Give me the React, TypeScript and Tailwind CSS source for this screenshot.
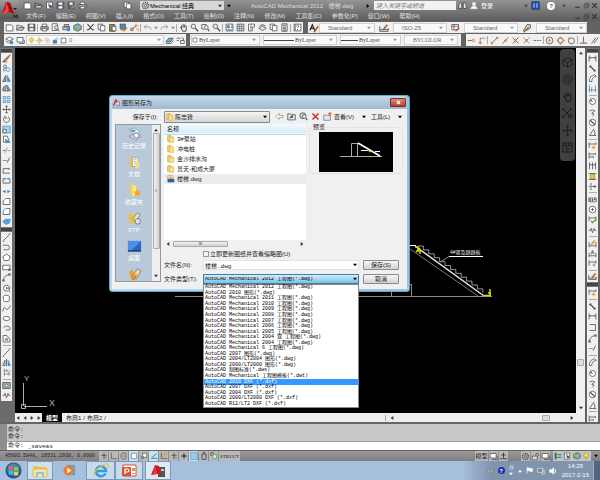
import React from "react";

const ink = "#4a4a4a";
const blue = "#3f8fd0";
const orange = "#e8793a";

const glyphs: Record<string, React.ReactNode> = {
  new: <path d="M1.5 2.5h7l2 2v6h-9z" fill="#fff" />,
  open: (
    <>
      <path d="M1 9.5V3h3l1 1h4v2" />
      <path d="M1 9.5 3.5 6H11L9 9.5z" fill="#c8c8c8" />
    </>
  ),
  save: (
    <>
      <path d="M1.5 1.5h9v9h-9z" fill="#5b6b80" />
      <path d="M3.5 2h5v3h-5zM3.5 7h5v3h-5z" fill="#fff" stroke="none" />
    </>
  ),
  saveEdit: (
    <>
      <path d="M1.5 1.5h8v9h-8z" fill="#5b6b80" />
      <path d="M3.5 2h4v3h-4z" fill="#fff" stroke="none" />
      <path d="m6 10 5-5" stroke={orange} strokeWidth={2} />
    </>
  ),
  sheet: (
    <>
      <path d="M2 1.5h8v9H2z" fill="#fff" />
      <path d="M4 4h3M4 6h4" />
      <circle cx="7.500" cy="7.500" r="1.500" fill={ink} />
    </>
  ),
  print: (
    <>
      <path d="M3 1.500h6V5H3z" fill="#fff" />
      <path d="M1 5h10v4H1z" fill="#b0b0b0" />
      <path d="M3 7.500h6v3H3z" fill="#fff" />
    </>
  ),
  preview: (
    <>
      <path d="M1.500 1h7v9h-7z" fill="#fff" />
      <circle cx="7" cy="6" r="2.500" fill="#dfe9f2" />
      <path d="m9 8 2 3" />
    </>
  ),
  publish: (
    <>
      <path d="M1 5h9v4H1zM3 2h6v3H3z" fill="#ccc" />
      <circle cx="8.500" cy="8.500" r="2.500" fill={blue} stroke="none" />
    </>
  ),
  globe: (
    <>
      <path d="m6 1 5 2.500v5L6 11 1 8.500v-5z" fill="#6dafd6" />
      <path d="M1 3.500 6 6v5M6 6l5-2.500" stroke="#e0b030" />
      <path d="M2 6v3l3 1.500V7z" fill="#62b34a" stroke="none" />
    </>
  ),
  cut: <path d="m2 1.500 7 8M10 1.500l-7 8M1 9h2M9 9h2" strokeWidth={1.400} />,
  copy: (
    <>
      <path d="M1.500 1.500h6v7h-6z" fill="#fff" />
      <path d="M4.500 3.500h6v7h-6z" fill="#fff" />
    </>
  ),
  paste: (
    <>
      <path d="M2 2h7v9H2z" fill="#a08050" />
      <path d="M5.500 4.500h5v6h-5z" fill="#fff" />
    </>
  ),
  clip: (
    <>
      <path d="M1.500 1.500h7v6h-7z" fill={blue} />
      <path d="M2 9h5M6 11l5-5" stroke="#c9822f" strokeWidth={2} />
    </>
  ),
  blocks: (
    <>
      <path d="M1 10h3V7H1zM4 7l4-3" />
      <path d="M8 1v5M6 3.500h5M8 8h3v3" stroke={orange} />
    </>
  ),
  undo: <path d="M4.500 2 1.500 5l3 3M2 5h6q3 0 2.500 4" stroke="#8a8a8a" />,
  redo: <path d="m7.500 2 3 3-3 3M10 5H4Q1 5 1.500 9" stroke="#8a8a8a" />,
  hand: <path d="M3 7 1.500 5.500M3.500 8V3M5.500 6V1.500M7.500 6V2M9.500 7V3.500M3 7l2 4h4l1-4" strokeWidth={1.300} />,
  zoom: (
    <>
      <circle cx="4.500" cy="4.500" r="3" fill="#e3edf5" />
      <path d="m7 7 4 4" strokeWidth={1.600} />
    </>
  ),
  zoomWin: (
    <>
      <path d="M1 2h6v6H1z" />
      <circle cx="7" cy="6" r="2.500" fill="#fff" />
      <path d="m9 8 2 3" strokeWidth={1.500} />
    </>
  ),
  zoomExtents: (
    <>
      <path d="m1 1 9 9M10 1 1 10M1 3V1h2M8 1h2v2M1 8v2h2" />
      <circle cx="9" cy="9" r="2" />
    </>
  ),
  panel: (
    <>
      <path d="M1.500 1.500h9v9h-9z" fill="#fff" />
      <path d="M2.500 3h4v4h-4z" fill={blue} stroke="none" />
      <path d="M8 4h2M8 6h2M3 9h6" />
    </>
  ),
  grid: (
    <>
      <path d="M1.500 1.500h9v9h-9z" fill="#dce6ee" />
      <path d="M4.500 2v8M7.500 2v8M2 4.500h8M2 7.500h8" strokeWidth={0.700} />
    </>
  ),
  palette: <path d="M2 1.500h8v4H7v5H2zM4 4h3M4 6h2M4 8h2" fill="#fff" />,
  layers: <path d="m1 7 5-3 5 3-5 3zM2 4l4-2 4 2" fill="#dfe7ec" />,
  monitor: (
    <>
      <path d="M1.500 2h8v6h-8z" fill="#fff" />
      <path d="M4 10h7V5" />
    </>
  ),
  calc: <path d="M2.500 1h7v10h-7zM4 3h4M4 5.500h4M4 7.500h4M4 9.500h4" fill="#e8e8e8" />,
  help: (
    <>
      <path d="M1.500 1.500h9v9h-9z" fill="#fff" />
      <path d="M4.500 4Q6 2 7.500 4 7.500 5.500 6 6.500M6 8v1.500M3 2v8" />
    </>
  ),
  textStyle: (
    <>
      <path d="m1 9 3-7 3 7M2 6.500h4" strokeWidth={1.400} stroke="#222" />
      <path d="m6 11 5-7" stroke="#b05a28" strokeWidth={2} />
    </>
  ),
  dimStyle: (
    <>
      <path d="M1 4v6h10V6M1 8h10" />
      <path d="m5 8 5-6" stroke="#b05a28" strokeWidth={2} />
    </>
  ),
  tableStyle: (
    <>
      <path d="M1 2h9v7H1zM1 4.500h9M4 2v7" fill="#fff" />
      <path d="m6 11 5-5" stroke="#b05a28" strokeWidth={1.600} />
    </>
  ),
  leader: (
    <>
      <path d="M2 9 6 2h4v4L5 9z" fill="#ddd" />
      <path d="m2 11 6-6" stroke="#9b6a33" strokeWidth={1.600} />
    </>
  ),
  layerProps: (
    <>
      <path d="m1 4 5-2.500L11 4 6 6.500zM1 7l4 2" fill="#fff" />
      <circle cx="8.500" cy="8.500" r="2.500" fill={blue} stroke="none" />
    </>
  ),
  bulb: <path d="M4 8Q1.500 5 3.500 2.500t5 0T8 8zM4.500 10h3" fill="#ffe14f" stroke="#a88a28" />,
  sun: (
    <>
      <circle cx="6" cy="6" r="2.500" fill="#ffd84a" stroke="#a88a28" />
      <path d="M6 0v2M6 10v2M0 6h2M10 6h2M2 2l1 1M9 9l1 1M10 2 9 3M3 9l-1 1" stroke="#8f7a36" />
    </>
  ),
  freeze: <path d="M2 2h5v5H2zM5 5h5v5H5z" stroke="#bbb" fill="#eee" />,
  lock: (
    <>
      <path d="M2 5.500h6v5H2z" fill={blue} />
      <path d="M6.500 5V2.500q2-2 3.500 0V5" stroke={blue} />
    </>
  ),
  unlock: (
    <>
      <path d="M1.500 5.500h7v5h-7z" fill="#ddd" />
      <path d="M6.500 5V2.500q2-2 3.500 0V5" />
    </>
  ),
  square: <path d="M2 2h8v8H2z" fill="#fff" stroke="#222" />,
  layerPrev: (
    <>
      <path d="m1 8 4-5h6L7 8z" fill="#6fb0d8" />
      <path d="M1 10h7l3-4" />
    </>
  ),
  layerState: <path d="M1 3h5M1 6h3M8 2q3 1 2 4M6 6h5v4H6z" />,
  snapPoint: (
    <>
      <path d="M1 6h7" />
      <circle cx="8.500" cy="6" r="1.700" stroke={orange} fill="#f9c9ae" />
    </>
  ),
  snapFrom: (
    <>
      <path d="M3 3h7M3 3v5" strokeDasharray="2 1" />
      <circle cx="3" cy="9" r="1.500" stroke={orange} fill={orange} />
    </>
  ),
  endpoint: (
    <>
      <path d="m2 10 8-8" />
      <circle cx="2.500" cy="9.500" r="1.300" stroke={orange} fill={orange} />
      <circle cx="9.500" cy="2.500" r="1.300" stroke={orange} fill={orange} />
    </>
  ),
  midpoint: (
    <>
      <path d="m2 10 8-8" />
      <path d="m4.500 7.500 3-3" stroke={orange} strokeWidth={2.500} />
    </>
  ),
  intersect: (
    <>
      <path d="m2 2 8 8M10 2l-8 8" />
      <circle cx="6" cy="6" r="1.500" fill={orange} stroke="none" />
    </>
  ),
  apparent: (
    <>
      <path d="m2 2 8 8M10 2l-8 8" strokeDasharray="2 1" />
      <circle cx="6" cy="6" r="1.500" fill={orange} stroke="none" />
    </>
  ),
  dash: <path d="M1 6h3M5 6h3M9 6h2" />,
  center: (
    <>
      <circle cx="6" cy="6" r="4.500" />
      <circle cx="6" cy="6" r="1.700" fill={orange} stroke="none" />
    </>
  ),
  quadrant: (
    <>
      <circle cx="6" cy="6" r="3.500" />
      <path d="M6 1v2.500M6 9v2.500M1 6h2.500M9 6h2.500" stroke={orange} strokeWidth={2.200} />
    </>
  ),
  tangent: (
    <>
      <circle cx="6" cy="6.500" r="4" />
      <circle cx="3" cy="3" r="1.300" fill={orange} stroke="none" />
    </>
  ),
  perp: (
    <>
      <path d="M6 1v8M1 9.500h10" />
      <circle cx="6" cy="9" r="1.600" fill={orange} stroke="none" />
    </>
  ),
  layout: <path d="M6 1v7M3 4h6M1 9h10" stroke="#222" />,
  parallel: <path d="m2 10 6-8M5 10l6-8" />,
  erase: (
    <>
      <path d="m1 10 4-4 6-5-4 6-3 3z" fill="#d98a4b" stroke="#8a4a22" />
      <path d="M1 10.500h6" stroke="#555" />
    </>
  ),
  copyObj: (
    <>
      <circle cx="4" cy="3.500" r="2" />
      <circle cx="3" cy="8" r="1.500" stroke={blue} />
      <circle cx="8" cy="7.500" r="2.500" stroke={blue} />
    </>
  ),
  mirror: (
    <>
      <path d="M5 2v8H1z" fill="#aaa" />
      <path d="M7 2v8h4z" fill={blue} stroke={blue} />
    </>
  ),
  offset: (
    <>
      <path d="M1 9q0-7 6-7l4 7z" fill="#7db4dd" />
      <path d="M4 9q0-4 3-4l1 4z" fill="#fff" />
    </>
  ),
  array: (
    <path d="M1.500 2h3.500v3H1.500zM7 2h3.500v3H7zM1.500 7h3.500v3H1.500zM7 7h3.500v3H7z" stroke={blue} fill="#d4e7f5" />
  ),
  move: <path d="M6 1v10M1 6h10M4.500 2.500 6 1l1.500 1.500M4.500 9.500 6 11l1.500-1.500M2.500 4.500 1 6l1.500 1.500M9.500 4.500 11 6 9.500 7.500" />,
  rotate: <path d="M4 2.500a4 4 0 1 0 4 0M4 1v3h3" />,
  scale: (
    <>
      <path d="M1 1.500h10v9H1z" fill="#a9d4ee" stroke={blue} />
      <path d="M1.500 6h4v4.500h-4z" fill="#fff" />
    </>
  ),
  stretch: (
    <>
      <path d="M2 1.500h5l3 8H2z" fill="#fff" />
      <path d="M5 10V5l5 5z" fill={blue} stroke={blue} />
    </>
  ),
  trim: (
    <>
      <path d="M1 6h3" />
      <path d="m4 9 3-7M7 6h4" stroke={blue} />
    </>
  ),
  extend: (
    <>
      <path d="M1 6h6" stroke={blue} />
      <path d="m7 9 3-7" />
    </>
  ),
  breakPt: (
    <>
      <path d="M1.500 9.500v-6h9M1.500 9.500h9" />
      <circle cx="9" cy="3.500" r="1.300" fill={blue} stroke="none" />
    </>
  ),
  breakTwo: (
    <>
      <path d="M4 3.500H1.500v6h9v-6H8" />
      <path d="M3.500 3.500h2M7 3.500h2" stroke={blue} strokeWidth={2} />
    </>
  ),
  join: <path d="M1 6h4M7 6h4M4 4v4M8 4v4" stroke={blue} strokeWidth={1.600} />,
  chamfer: (
    <>
      <path d="M1.500 10V5M5 2h5.500v8h-9" fill="#fff" />
      <path d="M1.500 6 5 2" stroke={blue} />
    </>
  ),
  fillet: (
    <>
      <path d="M6 2h4.500v8h-9V7" fill="#fff" />
      <path d="M1.500 7q0-5 5-5" stroke={blue} />
    </>
  ),
  explode: <path d="m1 6 4-3 6 0-1 5-5 2z" fill="#5aa5dc" stroke={blue} />,
  line: <path d="m2 10 8-8M1 11h2M9 1h2" />,
  pline: <path d="M1 3h6q3 0 3 3t-3 3H2" />,
  polygon: <path d="m6 1.500 5 3.500-2 5H3L1 5z" fill="#fff" />,
  rect: <path d="M1 3h9.500v6H1zM9 8h2v2H9z" fill="#fff" />,
  arc: <path d="M2 10q0-7 8-8M1 9h2v2H1zM9 1h2v2H9z" />,
  circle: (
    <>
      <circle cx="6" cy="5.500" r="4" fill="#fff" />
      <path d="M6 5.500h5M6 4v3M10 9v2" />
    </>
  ),
  cloud: <path d="M3 2q2-1 3 0 3-1 4 2-1 2 0 4-1 3-4 2-3 1-4-1 0-2 0-3Q1 3 3 2" fill="#fff" />,
  spline: <path d="M1 10q1-8 4-4t6-4" />,
  ellipse: <ellipse cx="6" cy="6" rx="4.500" ry="2.800" fill="#fff" />,
  ellipseArc: <path d="M2 5q2-3 6-2t2 5H5" />,
  block: <path d="M1.500 2h5l4 5v3.500h-9zM4 8l2-3 2 3z" fill="#fff" />,
  mirrorMan: (
    <>
      <path d="M6 1v10M4 3v7H1z" />
      <path d="M8 3v7h3z" stroke={blue} fill={blue} />
    </>
  ),
  axes: <path d="M3 1v10M3 4h8M3 8h8M6 2v2M9 6v4" strokeDasharray="2 1" />,
  view: (
    <>
      <path d="M1 2h10v8H1z" fill="#9fb6c6" />
      <circle cx="6" cy="6" r="2" fill="#fff" />
    </>
  ),
  zig: <path d="m1 6 2 0 1-3 2 6 2-6 1 3h2" />,
  dimLin: <path d="M1.500 2v8M10.500 2v8M1.500 5h9M3 4v2M9 4v2" />,
  dimAl: <path d="m3 3 6 6M2 4l2-2M8 10l2-2" strokeWidth={1.500} />,
  dimArc: <path d="M2 10V7q1-5 7-6l2 2q-6 1-6 7z" fill="#fff" />,
  dimOrd: (
    <>
      <path d="M2 1v10M5 4v7M10 2v9" stroke={blue} />
      <path d="M1 8h10" strokeDasharray="2 1" />
    </>
  ),
  dimRad: (
    <>
      <circle cx="6" cy="6" r="4" fill="#fff" />
      <path d="M6 6 3 4" strokeWidth={1.500} />
    </>
  ),
  dimJog: <path d="M2 4q4-3 7 0M9 4 5 7l3 1-2 3" />,
  dimDia: (
    <>
      <circle cx="6" cy="6" r="4.300" fill="#fff" />
      <path d="m3 3 6 6" strokeWidth={1.500} />
    </>
  ),
  dimAng: <path d="M8 1 2 10h9M8 3q2 3 1 7" />,
  dimQuick: (
    <>
      <path d="M1.500 2v7M10.500 2v3M1.500 4h9" />
      <path d="M7.500 6v5M5 8.500h5" stroke="#f0a030" strokeWidth={1.800} />
    </>
  ),
  dimBase: <path d="M1.500 2v8M1.500 4h9M1.500 8h6M10 3v2M7 7v2" />,
  dimCont: <path d="M2 2v9M6 2v9M10 2v9M2 5h8" />,
  dimSpace: (
    <>
      <path d="M3 3h6v6H3z" fill="#f2c14d" stroke="#b08020" />
      <path d="M1 2h10M1 10h10" />
    </>
  ),
  dimBreak: <path d="M4 1v10M1 6h2M5 6h6M9 4v4" />,
  chainBox: <path d="M2 2h8v8H2" />,
  tol: (
    <>
      <path d="M1 4h10v5H1z" fill="#fff" />
      <path d="M3 5v3M6 5v3M8 6h2" strokeWidth={1.800} />
    </>
  ),
  centerMark: (
    <>
      <circle cx="6" cy="6" r="4.500" fill="#fff" />
      <path d="M4 6h4M6 4v4" />
    </>
  ),
  inspect: (
    <>
      <path d="M1.500 2v6M10.500 2v6M1.500 4h9" />
      <path d="m4 8 2 2 5-4" stroke="#52a53a" strokeWidth={1.800} />
    </>
  ),
  dimEdit: (
    <>
      <path d="M1.500 4v7M10.500 4v7M1.500 9h9" />
      <path d="m4 8 5-6" stroke="#e0962d" strokeWidth={2} />
    </>
  ),
  dimText: <path d="M1.500 5v6M10.500 5v6M1.500 9h9M4 7l2-5 2 5M5 5h2" />,
  dimUpdate: (
    <>
      <path d="M1.500 2v7M10.500 2v4M1.500 4h9" />
      <path d="M8 6v4M6 8h4" stroke="#52a53a" />
    </>
  ),
  cube: <path d="m6 1 5 2.500v5L6 11 1 8.500v-5zM1 3.500 6 6l5-2.500M6 6v5" />,
  wheel: (
    <>
      <circle cx="6" cy="6" r="5" />
      <path d="M4 4h4v4H4z" />
    </>
  ),
  orbit: <path d="M6 0v12M1 6h10M4 2l2-2 2 2M4 10l2 2 2-2M3 4 1 6l2 2M9 4l2 2-2 2" />,
  play: <path d="M1 1h10v10H1zM1 4h10M4 1v3M8 1v3M5 6l3 2-3 2z" />,
  binoculars: <path d="M1 10V6l2-4h2v8zM11 10V6L9 2H7v8zM5 5h2" fill="#ddd" stroke="#444" />,
  user: <path d="M4 1h4v4H4zM1 10q1-4 5-4t5 4z" fill="#fff" stroke="#e8e8e8" />,
  book: (
    <>
      <path d="M1 1h10v10H1z" fill="#1f4fae" stroke="#17377b" />
      <path d="M4 3v6M8 3v6" stroke="#fff" />
    </>
  ),
  min: <path d="M2 9h8" strokeWidth={1.800} />,
  restore: <path d="M2 5h6v5H2zM4 5V2h6v6H8" />,
  close: <path d="m2 2 8 8M10 2l-8 8" strokeWidth={1.800} />,
  gear: (
    <>
      <circle cx="6" cy="6" r="4" strokeDasharray="1.500 1" strokeWidth={2} />
      <circle cx="6" cy="6" r="1.500" />
    </>
  ),
  folder: (
    <>
      <path d="M1 1h5v9H1z" fill="#f5d468" stroke="#c9a23a" />
      <path d="M4 3h6v8H4z" fill="#fae38c" stroke="#d7b14b" />
    </>
  ),
  dwg: (
    <>
      <path d="M1 1h8v8H1z" fill="#fff" stroke="#999" />
      <path d="m1 3 5-1 4 4H3z" fill="#e3b72d" stroke="none" />
      <path d="M1 6h10v5H1z" fill="#2a62a8" stroke="none" />
    </>
  ),
  plug: (
    <>
      <path d="M1 1h6v10H1z" fill="#f4d824" stroke="none" />
      <path d="M1 1h3v10H1z" fill="#1f62c4" stroke="none" />
      <path d="M5 4h6M5 8h6" stroke="#1f62c4" strokeWidth={1.500} />
    </>
  ),
  back: <path d="M5.500 2 1.500 6l4 4V7.500h5v-3h-5z" fill="#fff" stroke="#888" />,
  upFolder: (
    <>
      <path d="M1 2.500h4l1 1h5v7H1z" fill="#e4e8ec" />
      <path d="m4 8 3-3v3" strokeWidth={1.500} />
    </>
  ),
  searchWeb: (
    <>
      <circle cx="5" cy="5" r="4" fill="#b8dac6" />
      <circle cx="7" cy="6" r="2.500" fill="#eef5fa" />
      <path d="m9 8 2 3" strokeWidth={1.500} />
    </>
  ),
  del: <path d="m2 2 8 8M10 2l-8 8" stroke="#c9302c" strokeWidth={2} />,
  newFolder: (
    <>
      <path d="M1 4h4l1 1h4v6H1z" fill="#dbeaf5" stroke="#777" />
      <path d="M9 0v5M6.500 2.500h5" stroke={orange} strokeWidth={2} />
    </>
  ),
  snap: <path d="M6 1v10M2 5h8M8 8h2" stroke="#333" />,
  ortho: <path d="M2 1v9h9" />,
  polar: <path d="M10 4a4.500 4.500 0 1 0 0 4M5 6h5" />,
  osnap: <path d="M2 2h8v8H2z" fill="#fff" stroke="#5a6f7c" />,
  osnap3: <path d="M4 2h6v6H4zM2 7h3v3H2z" fill="#fff" />,
  angle: <path d="M10 2 2 9.500h9" stroke="#2d84b8" strokeWidth={1.400} />,
  ducs: (
    <>
      <path d="M2 1v9h9" />
      <path d="m4 8 6-6" stroke="#e0a020" strokeWidth={2} />
    </>
  ),
  plus: <path d="M6 2v8M2 6h8" stroke="#222" strokeWidth={1.500} />,
  hatch: (
    <>
      <path d="M1 1h10v10H1z" fill="#8cbde4" stroke="#4f8fc4" />
      <path d="m1 5 4-4M1 9l8-8M3 11l8-8M7 11l4-4" stroke="#fff" strokeWidth={0.700} />
    </>
  ),
  bin: <path d="M3 3h6v8H3zM4 1h4" stroke="#222" />,
  cycle: (
    <>
      <path d="M1 1h4v4H1z" />
      <path d="M4 4h6v6H4z" fill="#d2e8cf" stroke="#4a9a45" />
    </>
  ),
  speaker: <path d="M1 4h3l3-3v10L4 8H1zM9 3q2 3 0 6" fill="#fff" stroke="#fff" />,
  flag: <path d="M2 1v11M2 1.500h4l1 1h4v5H7l-1-1H2z" fill="#fff" stroke="#fff" />,
  net: <path d="M1 2h8v6H1zM8 5h3v6H8z" fill="#7a8594" stroke="#e8edf2" />,
  keyboard: <path d="M1 4h10v6H1zM3 6h6M3 8h6" fill="#bbb" stroke="#777" />,
};

const Glyph = ({ name, className = "size-[9px]" }: { name: string; className?: string }) => (
  <svg viewBox="0 0 12 12" className={`shrink-0 ${className}`} fill="none" stroke={ink} strokeWidth={1} aria-hidden="true">
    {glyphs[name]}
  </svg>
);

const Arrow = ({ dir = "down", className = "text-[#333]" }: { dir?: string; className?: string }) => {
  const d: Record<string, string> = {
    down: "M0 1h6L3 5z",
    up: "M0 5h6L3 1z",
    left: "M5 0v6L1 3z",
    right: "M1 0v6l4-3z",
  };
  return (
    <svg viewBox="0 0 6 6" className={`size-1 shrink-0 fill-current ${className}`} aria-hidden="true">
      <path d={d[dir]} />
    </svg>
  );
};

// "|" draws a separator and "v" a small drop-down arrow
const ToolRow = ({ items }: { items: string[] }) => (
  <div className="flex h-full items-center">
    {items.map((name, i) => {
      if (name === "|") return <span key={i} className="mr-px h-2 w-px bg-[#aaa]" />;
      if (name === "v")
        return (
          <button key={i} aria-label="more" className="flex w-[6px] justify-center">
            <Arrow className="text-[#888]" />
          </button>
        );
      return (
        <button key={i} aria-label={name} className="flex w-[11px] justify-center">
          <Glyph name={name} />
        </button>
      );
    })}
  </div>
);

const ToolColumn = ({ items, className }: { items: string[]; className: string }) => (
  <div className={`flex flex-col items-center bg-[#f0f0f0] ${className}`}>
    <div className="h-[5px] w-full shrink-0 border-y border-[#777] bg-[#444]" />
    {items.map((name, i) =>
      name === "|" ? (
        <span key={i} className="my-px h-px w-2 shrink-0 bg-[#aaa]" />
      ) : (
        <button key={i} aria-label={name} className="flex min-h-0 flex-1 items-center justify-center">
          <Glyph name={name} />
        </button>
      )
    )}
  </div>
);

const Combo = ({ label, value, className }: { label: string; value: string; className: string }) => (
  <div className={`relative flex items-center border border-[#d0d0d0] bg-[#fafafa] ${className}`}>
    <select aria-label={label} className="h-full w-full appearance-none bg-transparent pl-2 leading-none text-[#666] outline-none">
      <option>{value}</option>
    </select>
    <span className="pointer-events-none absolute right-[3px]">
      <Arrow className="text-[#999]" />
    </span>
  </div>
);

const menus = [
  "文件(F)",
  "编辑(E)",
  "视图(V)",
  "插入(I)",
  "格式(O)",
  "工具(T)",
  "绘制(D)",
  "注释(N)",
  "修改(M)",
  "工具集(C)",
  "参数化(P)",
  "窗口(W)",
  "帮助(H)",
];

const WindowButtons = () => (
  <div className="flex w-6 shrink-0 justify-between">
    {["min", "restore", "close"].map((n) => (
      <button key={n} aria-label={n}>
        <Glyph name={n} className="size-[7px] stroke-[#333]" />
      </button>
    ))}
  </div>
);

const Header = () => (
  <header className="flex h-[21px] shrink-0 bg-linear-to-b from-[#949494] to-[#5c5c5c]">
    <button
      aria-label="AutoCAD"
      className="flex h-[19px] w-[19px] shrink-0 items-center bg-linear-to-b from-[#a0a0a0] to-[#555]"
    >
      <svg viewBox="0 0 19 19" className="size-[19px]" aria-hidden="true">
        <path d="M2 14 6 2l4 1 4 11-4-2-4 1z" fill="#c5121c" />
        <path d="M6 2 6 9l-4 5 5-1 2-3z" fill="#f04a4a" />
        <path d="m7 2 3 1 4 11-4-2z" fill="#9c0f17" />
        <path d="M13 8h4l-2 2z" fill="#222" />
        <path d="M14 18v-3l1.500 2 1.500-2v3" fill="none" stroke="#111" strokeWidth=".8" />
      </svg>
    </button>
    <div className="flex min-w-0 flex-1 flex-col">
      <div className="flex h-[11px] items-center pr-0.5">
        <div className="w-[121px] shrink-0 pl-[3px]">
          <ToolRow items={["new", "open", "sheet", "save", "saveEdit", "print", "undo", "v", "redo", "v", "copy"]} />
        </div>
        <div className="relative flex h-[9px] w-[84px] shrink-0 items-center bg-[#d8d8d8] pl-px">
          <Glyph name="gear" />
          <select aria-label="工作空间" className="w-full appearance-none bg-transparent leading-none text-black">
            <option>Mechanical 经典</option>
          </select>
          <span className="pointer-events-none absolute right-[2px]">
            <Arrow />
          </span>
        </div>
        <span className="ml-[3px]">
          <Arrow className="text-black" />
        </span>
        <h1 className="ml-5 flex-1 whitespace-nowrap text-[#dcdcdc]">
          AutoCAD Mechanical 2012 <span className="ml-1">楼梯.dwg</span>
        </h1>
        <Arrow dir="right" className="text-black" />
        <input
          aria-label="搜索"
          placeholder="键入关键字或短语"
          className="ml-1 h-[9px] w-[82px] bg-[#f2f2f2] pl-0.5 italic placeholder:text-[#777]"
        />
        <div className="ml-0.5 flex w-[108px] items-center gap-[3px]">
          <Glyph name="binoculars" />
          <Glyph name="user" className="size-2" />
          <button className="text-white">登录</button>
          <span className="ml-auto">
            <Arrow className="text-[#444]" />
          </span>
          <Glyph name="book" />
          <span className="mx-1 flex size-2 items-center justify-center rounded-full bg-white font-bold text-[#1f4fae]">?</span>
          <Arrow className="text-[#444]" />
        </div>
        <span className="ml-2">
          <WindowButtons />
        </span>
      </div>
      <div className="flex flex-1 items-center justify-between pr-0.5 pl-[7px]">
        <nav className="flex gap-[10px]">
          {menus.map((m) => (
            <button key={m} className="whitespace-nowrap text-[#e0e0e0]">
              {m}
            </button>
          ))}
        </nav>
        <WindowButtons />
      </div>
    </div>
  </header>
);

const LayerCombo = () => (
  <div className="relative flex h-[10px] w-[138px] items-center border border-[#d0d0d0] bg-[#fafafa] pl-px">
    {["bulb", "sun", "freeze", "lock", "square"].map((n) => (
      <Glyph key={n} name={n} className="mr-px size-[7px]" />
    ))}
    <select aria-label="图层" className="w-full appearance-none bg-transparent pl-px leading-none text-[#a07030]">
      <option>0</option>
    </select>
    <span className="pointer-events-none absolute right-[2px]">
      <Arrow className="text-[#999]" />
    </span>
  </div>
);

const LineCombo = ({ label, className, line }: { label: string; className: string; line?: string }) => (
  <div className={`relative flex h-[10px] items-center border border-[#d0d0d0] bg-[#fafafa] ${className}`}>
    {line ? (
      <span className={`h-px shrink-0 bg-[#444] ${line}`} />
    ) : (
      <Glyph name="square" className="size-[6px]" />
    )}
    <select aria-label={label} className="w-full appearance-none bg-transparent pl-px font-['Liberation_Serif',serif] leading-none text-[#444]">
      <option>ByLayer</option>
    </select>
    <span className="pointer-events-none absolute right-[3px]">
      <Arrow className="text-[#999]" />
    </span>
  </div>
);

const Toolbars = () => (
  <div className="flex shrink-0 flex-col gap-px bg-[#636363] pt-px pb-0.5 pl-1">
    <div className="flex h-[11px]">
      <div className="bg-[#f0f0f0]">
        <ToolRow
          items={[
            "new", "open", "save", "|",
            "print", "preview", "publish", "globe", "|",
            "cut", "copy", "paste", "clip", "blocks", "|",
            "undo", "v", "redo", "v", "|",
            "hand", "zoom", "zoomWin", "zoom", "|",
            "panel", "grid", "palette", "layers", "copy", "calc", "|",
            "help",
          ]}
        />
      </div>
      <div className="ml-[5px] flex items-center bg-[#f0f0f0] pl-px">
        <Glyph name="textStyle" className="size-[10px]" />
        <Combo label="文字样式" value="Standard" className="h-[10px] w-[56px]" />
        <Glyph name="dimStyle" className="mx-1 size-[10px]" />
        <Combo label="标注样式" value="ISO-25" className="h-[10px] w-[54px]" />
        <Glyph name="tableStyle" className="mx-1 size-[9px]" />
        <Combo label="表格样式" value="Standard" className="h-[10px] w-[54px]" />
        <Glyph name="leader" className="mx-1 size-[10px]" />
        <Combo label="引线样式" value="Standard" className="h-[10px] w-[51px]" />
      </div>
    </div>
    <div className="flex h-3">
      <div className="flex items-center bg-[#f0f0f0]">
        <ToolRow items={["layerProps", "monitor"]} />
        <LayerCombo />
        <ToolRow items={["layerPrev", "layerState"]} />
      </div>
      <div className="ml-1 flex flex-1 items-center gap-[3px] bg-[#f0f0f0] pl-px">
        <LineCombo label="颜色" className="w-[69px]" />
        <LineCombo label="线型" className="w-[74px]" line="w-[30px]" />
        <LineCombo label="线宽" className="w-[61px]" line="w-[17px]" />
        <Combo label="打印样式" value="BYCOLOR" className="h-[10px] w-[54px] font-['Liberation_Serif',serif]" />
      </div>
      <div className="ml-[5px] w-[134px] overflow-hidden bg-[#f0f0f0]">
        <ToolRow
          items={[
            "snapPoint", "snapFrom", "|",
            "endpoint", "midpoint", "intersect", "apparent", "dash", "|",
            "center", "quadrant", "tangent", "|",
            "perp", "parallel",
          ]}
        />
      </div>
    </div>
  </div>
);

const steps = "M418 246" + "h5.4v3.9".repeat(12);

const Drawing = () => (
  <svg viewBox="15 48 561 367" className="absolute top-0 left-0 h-[367px] w-[561px]" fill="none" aria-label="楼梯">
    <g stroke="#8c8c8c">
      <path d="M175 296.500h317M391.500 284v12M411.500 284v12M400 284.500h11" />
      <path d="m410 249 68 47" stroke="#777" />
      <path d="m415 246 69 50" stroke="#e4e4e4" strokeWidth="1.500" />
      <path d={steps} stroke="#bbb" strokeWidth=".8" />
      <path d="m440 262 9-5.500" />
      <path d="M449 256.500h34" stroke="#fff" />
      <path d="M410 245.500h6" stroke="#fff" />
    </g>
    <path d="M415 247h3v4h2v3M416 252l4-4M490 289v7M483 295.500h8M488 293h3" stroke="#d8d800" strokeWidth="1.500" />
    <text x="450" y="254" fill="#e8e8e8" fontSize="5">
      4#罩及踏踏板
    </text>
    <g stroke="#b0b0b0">
      <path d="M23.500 383v23M24 406.500h23M21.500 404.500h4v4h-4z" />
    </g>
    <text x="24" y="381" fill="#b0b0b0" fontSize="8">
      Y
    </text>
    <text x="49" y="406" fill="#b0b0b0" fontSize="9">
      X
    </text>
  </svg>
);

const NavBar = () => (
  <div className="absolute top-px right-px flex h-[112px] w-[15px] flex-col items-center justify-between rounded-sm bg-[#404040] py-2">
    {["cube", "wheel", "hand", "zoomExtents", "orbit", "play"].map((n) => (
      <button key={n} aria-label={n}>
        <Glyph name={n} className="size-[11px] stroke-[#1c1c1c]" />
      </button>
    ))}
  </div>
);

const Workspace = () => (
  <div className="flex min-h-0 flex-1">
    <div className="w-[15px] shrink-0 bg-[#6b6b6b] pl-px">
      <ToolColumn
        className="h-[179px] w-[11px]"
        items={[
          "erase", "copyObj", "mirror", "offset", "array", "move", "rotate", "scale", "stretch",
          "trim", "extend", "breakPt", "breakTwo", "join", "chamfer", "fillet", "explode",
        ]}
      />
      <ToolColumn
        className="h-[174px] w-[11px]"
        items={[
          "line", "pline", "polygon", "rect", "arc", "circle", "cloud", "spline", "ellipse", "ellipseArc", "block", "|",
          "line", "mirrorMan", "axes", "|",
          "view", "zig",
        ]}
      />
    </div>
    <main className="flex min-w-0 flex-1 flex-col">
      <div className="flex min-h-0 flex-1">
        <div className="relative min-w-0 flex-1 overflow-hidden bg-black">
          <Drawing />
          <NavBar />
        </div>
        <div className="flex w-[9px] flex-col items-center bg-[#f0f0f0] py-[3px]">
          <Arrow dir="up" />
          <span className="mt-auto mb-10 h-[7px] w-[7px] rounded-[1px] border border-[#aaa] bg-[#e0e0e0]" />
          <Arrow />
        </div>
      </div>
      <div className="flex h-[9px] shrink-0 items-center bg-[#eee]">
        <div className="flex w-[27px] items-center justify-around">
          <Arrow dir="left" />
          <Arrow dir="left" />
          <Arrow dir="right" />
          <Arrow dir="right" />
        </div>
        <button className="flex h-full w-5 items-center justify-center bg-black font-bold text-white">模型</button>
        <button className="pl-1">布局1</button>
        <span className="px-0.5">/</span>
        <button>布局2</button>
        <span className="px-0.5">/</span>
        <div className="ml-auto flex w-[200px] items-center border-l border-[#aaa] pl-1">
          <Arrow dir="left" />
          <span className="mr-5 ml-auto h-[6px] w-2 rounded-[1px] border border-[#aaa] bg-[#ddd]" />
          <span className="mr-[11px]">
            <Arrow dir="right" />
          </span>
        </div>
      </div>
    </main>
    <div className="w-[15px] shrink-0 overflow-hidden bg-[#636363] pl-0.5">
      <ToolColumn
        className="h-[234px] w-[11px]"
        items={[
          "dimLin", "dimAl", "dimArc", "dimOrd", "|",
          "dimRad", "dimJog", "dimDia", "dimAng", "|",
          "dimQuick", "dimBase", "dimCont", "dimSpace", "dimBreak", "|",
          "tol", "centerMark", "inspect", "zig", "|",
          "dimEdit", "dimText", "dimUpdate", "|",
          "dimStyle",
        ]}
      />
      <ToolColumn
        className="h-[142px] w-[11px]"
        items={[
          "dimQuick", "|",
          "dimAl", "dimLin", "chainBox", "arc", "extend", "|",
          "dimArc", "dimRad", "dimJog", "dimDia", "dimAng", "|",
          "dimBase",
        ]}
      />
    </div>
  </div>
);

const CommandLine = () => (
  <div className="shrink-0 border-t-2 border-[#666] bg-[#8f8f8f] pl-[7px] font-['Liberation_Mono','Noto_Sans_CJK_SC',monospace]">
    <div className="border-b border-[#999] bg-[#c8c8c8] pt-0.5 pb-px pl-px leading-[7px]">
      <p>命令:</p>
      <p>命令:</p>
    </div>
    <label className="flex h-2 items-center bg-white pl-px">
      命令:
      <input defaultValue="_saveas" className="ml-1 flex-1 outline-none" />
    </label>
  </div>
);

const toggles: [string, boolean][] = [
  ["snap", false],
  ["ortho", false],
  ["polar", false],
  ["osnap", true],
  ["osnap3", false],
  ["angle", true],
  ["ducs", false],
  ["snap", false],
  ["plus", false],
  ["hatch", true],
  ["bin", false],
  ["cycle", false],
];

const StatusBar = () => (
  <div className="flex h-[11px] shrink-0 items-center border-t border-[#666] bg-linear-to-b from-[#999] to-[#808080]">
    <span className="w-[99px] pl-[5px] font-['Liberation_Mono',monospace] text-[5px] whitespace-nowrap">
      45603.5848, 10531.2930, 0.0000
    </span>
    <div className="flex h-full gap-px">
      {toggles.map(([n, on], i) => (
        <button
          key={i}
          aria-label={n}
          className={`flex w-[9px] items-center justify-center ${on ? "bg-[#c5e4f0]" : "bg-[#b8b8b8]"}`}
        >
          <Glyph name={n} className="size-2" />
        </button>
      ))}
      <button className="bg-[#b8b8b8] px-px font-['Liberation_Serif',serif] text-[5px]">STRUCT</button>
    </div>
    <div className="ml-auto flex h-full items-center gap-px">
      <button className="h-full w-[13px] bg-[#b8b8b8]">模型</button>
      {["monitor", "layout"].map((n) => (
        <button key={n} aria-label={n} className="flex h-full w-[9px] items-center bg-[#b8b8b8]">
          <Glyph name={n} />
        </button>
      ))}
      <div className="ml-3 flex h-full gap-px">
        {["gear", "unlock", "monitor"].map((n) => (
          <button key={n} aria-label={n} className="flex w-[9px] items-center bg-[#b8b8b8]">
            <Glyph name={n} />
          </button>
        ))}
      </div>
      <div className="ml-0.5 flex h-full w-[38px] items-center justify-around bg-[#c4c4c4]">
        {["plug", "sheet", "globe", "bulb"].map((n) => (
          <Glyph key={n} name={n} className="size-2" />
        ))}
      </div>
      <span className="mx-0.5">
        <Arrow className="text-black" />
      </span>
    </div>
  </div>
);

const Taskbar = () => (
  <footer className="flex h-[19px] shrink-0 bg-linear-to-r from-[#a5bfdd] from-77% to-[#7f94ad] to-82%">
    <button aria-label="开始" className="w-[27px] pl-[5px]">
      <svg viewBox="0 0 18 18" className="size-[17px]">
        <circle cx="9" cy="9" r="8.500" fill="#24598f" />
        <circle cx="9" cy="8" r="6.500" fill="#3d86bd" />
        <path d="M4 5q2-1.500 4.500-.5v4Q6 7.500 4 9z" fill="#f0673a" />
        <path d="M9.500 5q2 1 4.500 0v4q-2.500 1-4.500 0z" fill="#90c944" />
        <path d="M4 10q2-1.500 4.500-.5v4Q6 12.500 4 14z" fill="#4fb4ea" />
        <path d="M9.500 10q2 1 4.500 0v4q-2.500 1-4.500 0z" fill="#fbc93c" />
      </svg>
    </button>
    <button aria-label="资源管理器" className="flex w-[26px] items-center justify-center border border-[#7f9ab8] bg-[#d0e0ec]">
      <svg viewBox="0 0 16 14" className="h-[14px] w-4">
        <path d="M1 2h5l1 1h8v9H1z" fill="#e8c65a" />
        <path d="M1 5h14v8H1z" fill="#f8e59a" stroke="#c9a64a" strokeWidth=".6" />
        <path d="M4 8h8v5H4z" fill="#8ec6ea" />
        <path d="M6 10h4v3H6z" fill="#f8e59a" />
      </svg>
    </button>
    <button aria-label="媒体播放器" className="flex w-[33px] items-center justify-center">
      <svg viewBox="0 0 14 14" className="size-[13px]">
        <path d="M4 1h9v11H4z" fill="#5ba4d8" />
        <circle cx="6" cy="7" r="5.500" fill="#ef7d22" />
        <path d="m4.500 4 4.500 3-4.500 3z" fill="#fff" />
      </svg>
    </button>
    <button aria-label="Internet Explorer" className="flex w-[29px] items-center justify-center border border-[#7f9ab8] bg-[#c8dbea]">
      <svg viewBox="0 0 16 16" className="size-4" fill="none">
        <path d="M12.500 10.500A5 5 0 1 1 13 8H4" stroke="#2e9fe0" strokeWidth="2.600" />
        <path d="M1 13Q0 9 7 4t8-2q1 1-1 4" stroke="#f0c040" strokeWidth="1.200" />
      </svg>
    </button>
    <button aria-label="PowerPoint" className="flex w-[28px] items-center justify-center border border-[#7f9ab8] bg-[#c8dbea]">
      <svg viewBox="0 0 16 14" className="h-[14px] w-4">
        <path d="M2 1h13v11H2z" fill="#fff" stroke="#d35230" />
        <path d="M1 3h9v9H1z" fill="#d9532c" />
        <path d="M4 10V5h2.500a1.500 1.500 0 0 1 0 3H4" fill="none" stroke="#fff" strokeWidth="1.200" />
        <path d="M11 4h3v3h-3zM11 9h3v1h-3z" fill="#e88a60" />
      </svg>
    </button>
    <button aria-label="AutoCAD" className="ml-0.5 flex w-[26px] items-center justify-center border border-[#7f9ab8] bg-[#dde8f1]">
      <svg viewBox="0 0 16 14" className="h-[14px] w-4">
        <path d="M8 3h7v10H8z" fill="#555" />
        <path d="M1 11 5 1l4 1 2 9-4-1z" fill="#c81a24" />
        <path d="M5 1 4 8l-3 3 6-1z" fill="#ef3a3a" />
        <path d="M11 5h3v2h-3z" fill="#ccc" />
      </svg>
    </button>
    <div className="ml-auto flex items-center gap-1 text-white">
      <Glyph name="keyboard" className="size-[7px]" />
      <span className="flex size-[7px] items-center justify-center rounded-full bg-[#1c2fa8] font-bold">?</span>
      <span className="flex flex-col items-center gap-0.5">
        <Glyph name="restore" className="size-[5px] stroke-white" />
        <Arrow className="text-white" />
      </span>
      <Arrow dir="up" className="text-white" />
      <Glyph name="flag" className="size-[7px]" />
      <Glyph name="net" className="size-2" />
      <Glyph name="speaker" className="size-2" />
      <div className="ml-px text-center leading-[9px]">
        <p>14:29</p>
        <p>2017-2-15</p>
      </div>
      <button aria-label="显示桌面" className="h-full w-[7px] border-l border-[#9fb0c4] bg-[#52677f]" />
    </div>
  </footer>
);

const places: { label: string; art: React.ReactNode }[] = [
  {
    label: "历史记录",
    art: (
      <>
        <path d="m2 3 6-2 6 4-5 3z" fill="#e8f0f6" stroke="#6f8aa0" strokeWidth=".6" />
        <path d="m2 10 8-4 5 4-6 4z" fill="#c6d0d8" stroke="#71818e" strokeWidth=".6" />
        <circle cx="10" cy="9" r="2.500" fill="#fff" stroke="#557" strokeWidth=".6" />
        <path d="M4 3h5v2H5z" fill="#4f9fd6" />
      </>
    ),
  },
  {
    label: "文档",
    art: (
      <>
        <path d="M3 2h5v12L3 12z" fill="#e9c14b" />
        <path d="M6 3h6v9H6z" fill="#fff" stroke="#6b92b8" strokeWidth=".6" />
        <path d="M7.500 5h3M7.500 7h3M7.500 9h3" stroke="#4a8ac0" strokeWidth=".6" />
        <path d="m9 7 4 0v7H9z" fill="#f6dd83" />
      </>
    ),
  },
  {
    label: "收藏夹",
    art: (
      <>
        <path d="M3 1h5v13l-5-2z" fill="#f3cf5e" />
        <path d="M6 3h4v11H6z" fill="#fae59a" />
        <path d="m11 6 1.500 3h3l-2.500 2 1 3.500-3-2-3 2 1-3.500L6.500 9h3z" fill="#f5a21d" />
      </>
    ),
  },
  {
    label: "FTP",
    art: (
      <>
        <path d="m1 4 5-2 3 10-5 2z" fill="#f0bd3c" />
        <path d="m6 9 5-7 3 1-4 9z" fill="#f8e3a0" stroke="#4b87b3" strokeWidth=".8" />
        <circle cx="11.500" cy="11" r="3" fill="#d6e4ee" stroke="#567" strokeWidth=".8" />
      </>
    ),
  },
  {
    label: "桌面",
    art: (
      <>
        <path d="M1 2h14v11H1z" fill="#2c62c4" />
        <path d="M1 2h14L4 13H1z" fill="#4a8fe8" />
        <path d="M1 12h14v1.500H1z" fill="#22405f" />
      </>
    ),
  },
  {
    label: "",
    art: (
      <>
        <path d="m2 5 4-2 3 9-4 2z" fill="#ef9f25" />
        <path d="m6 10 5-8 4 2-5 9z" fill="#f9d488" stroke="#5f7f96" strokeWidth=".8" />
        <path d="m5 13 4-5 2 1-3 5z" fill="#e98116" />
      </>
    ),
  },
];

const Places = () => (
  <div className="ml-[3px] flex w-[46px] shrink-0 border border-[#8d9aa8]">
    <div className="flex h-[156px] flex-1 flex-col overflow-hidden bg-[#b9c9da] pt-0.5">
      {places.map((p, i) => (
        <button key={i} className="flex h-7 shrink-0 flex-col items-center gap-px text-white">
          <svg viewBox="0 0 16 16" className="size-[15px]" aria-hidden="true">
            {p.art}
          </svg>
          {p.label && <span>{p.label}</span>}
        </button>
      ))}
    </div>
    <div className="flex w-2 flex-col items-center bg-[#eee] py-[3px]">
      <Arrow dir="up" />
      <span className="mt-px flex h-[116px] w-[7px] items-center justify-center rounded-[1px] border border-[#aaa] bg-linear-to-r from-[#f2f2f2] to-[#d2d2d2] text-[4px]">
        ≡
      </span>
      <span className="mt-auto">
        <Arrow />
      </span>
    </div>
  </div>
);

const files = [
  ["folder", "3#泵站"],
  ["folder", "冲电桩"],
  ["folder", "金沙排水沟"],
  ["folder", "普天-和成大厦"],
  ["dwg", "楼梯.dwg"],
];

const FileList = () => (
  <div className="flex w-[142px] shrink-0 flex-col bg-white">
    <table className="w-full border-collapse">
      <thead>
        <tr className="border-b border-[#a8dcf0] bg-linear-to-b from-[#f4fafd] to-[#d5ecf7]">
          <th className="h-[10px] p-0 pl-[3px] text-left font-normal">名称</th>
        </tr>
      </thead>
      <tbody>
        {files.map(([icon, name]) => (
          <tr key={name} className={icon === "dwg" ? "bg-[#ececec]" : ""}>
            <td className="h-[10px] p-0 pl-[3px]">
              <span className="flex items-center gap-0.5">
                <Glyph name={icon} className="size-2" />
                {name}
              </span>
            </td>
          </tr>
        ))}
      </tbody>
    </table>
    <div className="mt-auto flex h-[7px] items-center justify-between bg-[#f0f0f0] px-0.5">
      <Arrow dir="left" />
      <span className="mr-auto ml-[3px] flex h-[6px] w-[55px] items-center justify-center rounded-[1px] border border-[#aaa] bg-linear-to-b from-[#f4f4f4] to-[#cfcfcf] text-[4px]">
        III
      </span>
      <Arrow dir="right" />
    </div>
  </div>
);

const Preview = () => (
  <fieldset className="ml-[3px] h-[50px] w-[94px] rounded-sm border border-[#dde5e5]">
    <legend className="ml-0.5 h-[6px] px-px leading-none">预览</legend>
    <svg viewBox="0 0 74 40" className="mx-auto mt-0.5 h-10 w-[74px] bg-black" fill="none" aria-label="预览">
      <path d="M21 24.500h41M32.500 24V11.500h7M38.500 12v12" stroke="#aaa" />
      <path d="m39 11 22 13" stroke="#fff" strokeWidth="1.600" />
      <path d="M42 18.500h7M56 19.500h5" stroke="#fff" />
      <path d="m48 18 4 2M60 24.500h3M50 24.500h2" stroke="#dddd20" />
    </svg>
  </fieldset>
);

const formats = [
  "AutoCAD Mechanical 2012 工程图(*.dwg)",
  "AutoCAD 2010 图形(*.dwg)",
  "AutoCAD Mechanical 2011 工程图(*.dwg)",
  "AutoCAD Mechanical 2010 工程图(*.dwg)",
  "AutoCAD Mechanical 2009 工程图(*.dwg)",
  "AutoCAD Mechanical 2008 工程图(*.dwg)",
  "AutoCAD Mechanical 2007 工程图(*.dwg)",
  "AutoCAD Mechanical 2006 工程图(*.dwg)",
  "AutoCAD Mechanical 2005 工程图(*.dwg)",
  "AutoCAD Mechanical 2004 双 工程图(*.dwg)",
  "AutoCAD Mechanical 2004 工程图(*.dwg)",
  "AutoCAD Mechanical 6 工程图(*.dwg)",
  "AutoCAD 2007 图形(*.dwg)",
  "AutoCAD 2004/LT2004 图形(*.dwg)",
  "AutoCAD 2000/LT2000 图形(*.dwg)",
  "AutoCAD 制图标准(*.dws)",
  "AutoCAD Mechanical 工程图模板(*.dwt)",
  "AutoCAD 2010 DXF (*.dxf)",
  "AutoCAD 2007 DXF (*.dxf)",
  "AutoCAD 2004 DXF (*.dxf)",
  "AutoCAD 2000/LT2000 DXF (*.dxf)",
  "AutoCAD R12/LT2 DXF (*.dxf)",
];

const dialogButton =
  "h-[10px] rounded-[1px] border border-[#8a8a8a] bg-linear-to-b from-[#f6f6f6] to-[#d4d4d4] leading-none";

const SaveForm = () => (
  <form className="pb-1" onSubmit={(e) => e.preventDefault()}>
    <div className="flex h-[13px] items-center gap-px pl-[39px]">
      <input id="thumb" type="checkbox" className="size-[6px] appearance-none border border-[#999] bg-[#f4f4f4]" />
      <label htmlFor="thumb">立即更新图纸并查看缩略图(U)</label>
    </div>
    <div className="grid grid-cols-[39px_156px_40px] items-center gap-y-1">
      <label htmlFor="fname">文件名(N):</label>
      <div className="relative flex items-center">
        <input
          id="fname"
          defaultValue="楼梯.dwg"
          className="h-[10px] w-full border border-[#e2e2e2] bg-white pl-px font-['Liberation_Mono','Noto_Sans_CJK_SC',monospace]"
        />
        <span className="pointer-events-none absolute right-0.5">
          <Arrow className="text-black" />
        </span>
      </div>
      <button className={`ml-1 ${dialogButton}`}>保存(S)</button>
      <label htmlFor="ftype" className="whitespace-nowrap">
        文件类型(T):
      </label>
      <div className="relative flex items-center font-['Liberation_Mono','Noto_Sans_CJK_SC',monospace] text-[5px] text-black">
        <select
          id="ftype"
          className="h-[10px] w-full appearance-none border border-[#3c7fb1] bg-linear-to-b from-[#d3ecf8] to-[#7cc0e2] pl-px leading-none"
        >
          <option>{formats[0]}</option>
        </select>
        <span className="pointer-events-none absolute right-0.5">
          <Arrow className="text-black" />
        </span>
        <ul
          role="listbox"
          aria-label="文件类型"
          className="absolute top-full left-0 z-20 grid h-[124px] w-full auto-rows-fr border border-[#888] bg-white"
        >
          {formats.map((f, i) => (
            <li
              key={f}
              role="option"
              aria-selected={i === 17}
              className={`flex min-h-0 items-center pl-px leading-none whitespace-nowrap ${
                i === 17 ? "bg-[#3399ff] text-white" : ""
              }`}
            >
              {f}
            </li>
          ))}
        </ul>
      </div>
      <button className={`ml-1 ${dialogButton}`}>取消</button>
    </div>
  </form>
);

const SaveDialog = () => (
  <div
    role="dialog"
    aria-label="图形另存为"
    className="absolute top-[95px] left-[109px] w-[301px] rounded-[3px] border border-[#5aa9c9] bg-linear-to-r from-[#c3d8eb] to-[#a3bedb] px-0.5 pb-0.5"
  >
    <div className="flex h-[13px] items-center gap-0.5 rounded-t-sm bg-linear-to-b from-[#c6d8ea] to-[#9fb8d4] pr-px pl-px">
      <svg viewBox="0 0 12 12" className="size-[7px]" aria-hidden="true">
        <path d="M1 11 5 1l4 10" fill="none" stroke="#d22" strokeWidth="2" />
        <path d="M6 5h5v6H8" fill="#eee" stroke="#555" />
      </svg>
      <h2>图形另存为</h2>
      <button
        aria-label="关闭"
        className="ml-auto flex h-[9px] w-4 items-center justify-center rounded-[1px] border border-[#7a2b22] bg-linear-to-b from-[#d98b80] to-[#b83a28]"
      >
        <svg viewBox="0 0 6 6" className="size-[5px]" stroke="#fff" strokeWidth="1.500">
          <path d="m1 1 4 4M5 1 1 5" />
        </svg>
      </button>
    </div>
    <div className="bg-[#f0f0f0] pb-px">
      <div className="flex h-[15px] items-center">
        <label htmlFor="savein" className="w-[46px] text-right">
          保存于(I):
        </label>
        <div className="relative ml-[6px] flex h-3 w-[106px] items-center rounded-[1px] border border-[#8a8a8a] bg-linear-to-b from-[#f4f4f4] to-[#d6d6d6] pl-px">
          <Glyph name="folder" className="size-2" />
          <select id="savein" className="w-full appearance-none bg-transparent pl-px leading-none">
            <option>陈志锋</option>
          </select>
          <span className="pointer-events-none absolute right-0.5">
            <Arrow className="text-black" />
          </span>
        </div>
        <div className="ml-[5px] flex gap-[3px]">
          {["back", "upFolder", "searchWeb", "del", "newFolder"].map((n) => (
            <button key={n} aria-label={n}>
              <Glyph name={n} />
            </button>
          ))}
        </div>
        <button className="ml-0.5 flex items-center gap-2 whitespace-nowrap">
          查看(V)
          <Arrow className="text-black" />
        </button>
        <button className="ml-[5px] flex items-center gap-2 whitespace-nowrap">
          工具(L)
          <Arrow className="text-black" />
        </button>
      </div>
      <div className="flex items-start">
        <Places />
        <div className="ml-[3px] min-w-0 flex-1">
          <div className="flex h-[123px] items-stretch">
            <FileList />
            <Preview />
          </div>
          <SaveForm />
        </div>
      </div>
    </div>
  </div>
);

export default function App() {
  return (
    <div className="relative flex h-screen flex-col overflow-hidden bg-[#636363] font-['Liberation_Sans','Noto_Sans_CJK_SC',sans-serif] text-[6px] leading-none text-[#222]">
      <Header />
      <Toolbars />
      <Workspace />
      <CommandLine />
      <StatusBar />
      <Taskbar />
      <SaveDialog />
    </div>
  );
}
